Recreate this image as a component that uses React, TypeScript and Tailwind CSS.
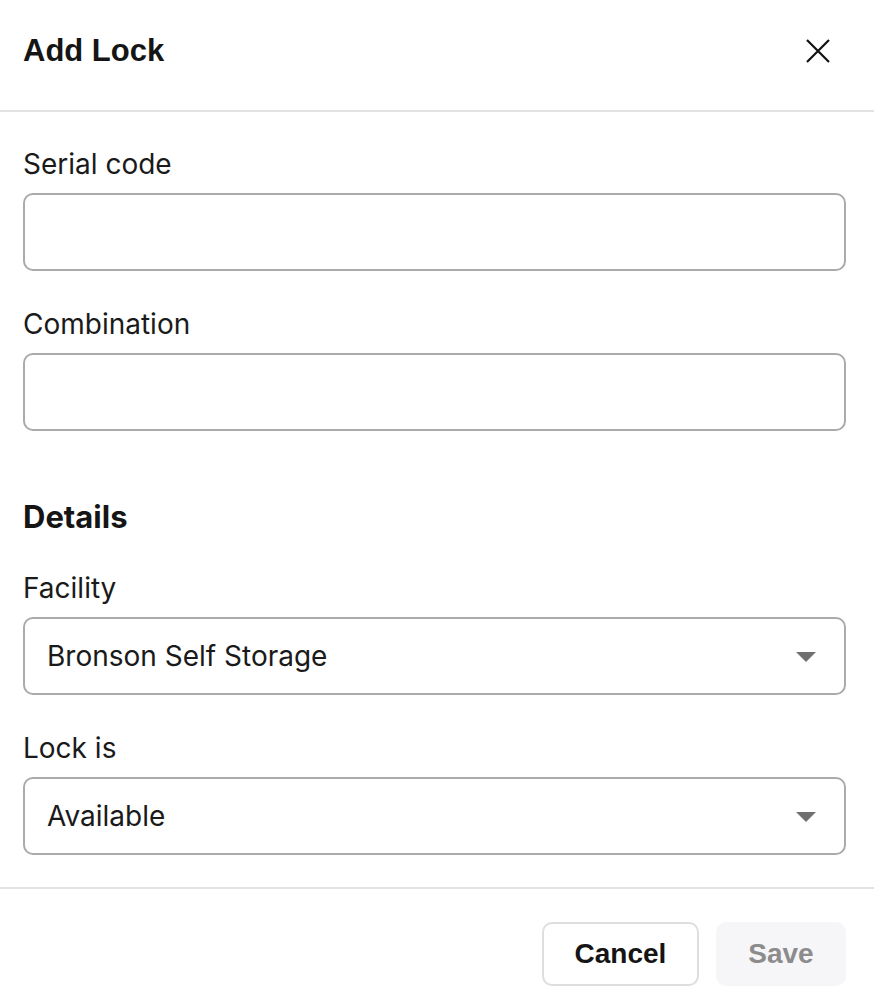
import React from "react";

const inter = { fontFamily: 'Inter, "Noto Sans", sans-serif' };
const arial = { fontFamily: '"Liberation Sans", Arial, sans-serif' };

function Label({ children }: { children: React.ReactNode }) {
  return (
    <div className="text-[28px] leading-[32px] text-[#1a1a1a]" style={inter}>
      {children}
    </div>
  );
}

function TextInput() {
  return (
    <div className="mt-[13px] h-[78px] w-full rounded-[10px] border-2 border-[#ababab] bg-white" />
  );
}

function Select({ value }: { value: string }) {
  return (
    <div className="mt-[13px] flex h-[78px] w-full items-center justify-between rounded-[10px] border-2 border-[#ababab] bg-white pl-[22px] pr-[28px]">
      <span className="text-[28px] leading-[32px] text-[#1a1a1a]" style={inter}>
        {value}
      </span>
      <svg width="20" height="10" viewBox="0 0 20 10" className="mt-[1px]">
        <path d="M0 0 L20 0 L10 10 Z" fill="#707070" />
      </svg>
    </div>
  );
}

export default function App() {
  return (
    <div className="h-[1008px] w-[874px] bg-white">
      <div className="flex h-[112px] items-center justify-between border-b-2 border-[#e2e2e2] pb-[9px] pl-[23px] pr-[44px]">
        <h1 className="text-[31px] font-bold leading-[36px] text-[#151515]" style={arial}>
          Add Lock
        </h1>
        <svg width="24" height="24" viewBox="0 0 24 24">
          <path d="M1 1 L23 23 M23 1 L1 23" stroke="#111" strokeWidth="2.2" />
        </svg>
      </div>
      <div className="pl-[23px] pr-[28px] pt-[36px]">
        <Label>Serial code</Label>
        <TextInput />
        <div className="mt-[37px]">
          <Label>Combination</Label>
        </div>
        <TextInput />
        <div className="mt-[68px] text-[31px] font-bold leading-[36px] text-[#151515]" style={inter}>
          Details
        </div>
        <div className="mt-[37px]">
          <Label>Facility</Label>
        </div>
        <Select value="Bronson Self Storage" />
        <div className="mt-[37px]">
          <Label>Lock is</Label>
        </div>
        <Select value="Available" />
      </div>
      <div className="mt-[32px] flex justify-end gap-[17px] border-t-2 border-[#e2e2e2] pr-[28px] pt-[33px]">
        <button
          className="h-[64px] w-[157px] rounded-[10px] border-2 border-[#dedede] bg-white text-[28px] font-bold text-[#151515]"
          style={arial}
        >
          Cancel
        </button>
        <button
          className="h-[64px] w-[130px] rounded-[10px] bg-[#f6f6f8] text-[28px] font-bold text-[#8c8c8c]"
          style={arial}
        >
          Save
        </button>
      </div>
    </div>
  );
}
